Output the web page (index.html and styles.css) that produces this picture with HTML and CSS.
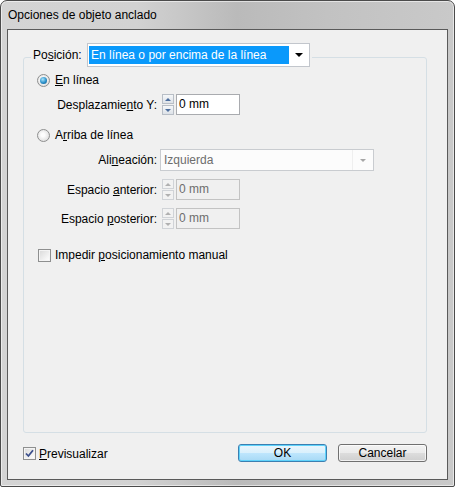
FILE: index.html
```html
<!DOCTYPE html>
<html lang="es">
<head>
  <meta charset="UTF-8" />
  <title>Opciones de objeto anclado</title>
  <link rel="stylesheet" href="styles.css">
</head>
<body>
  <div class="window">
    <div class="titlebar">Opciones de objeto anclado</div>

    <div class="client">
      <div class="group">
        <!-- group header sits over the top border -->
        <div class="group-head">
          <span class="head-label">Po<u>s</u>ición:</span>
          <div class="select select-focus">
            <span class="select-value">En línea o por encima de la línea</span>
            <span class="select-arrow"></span>
          </div>
        </div>

        <div class="option row-inline">
          <span class="radio checked"></span>
          <span><u>E</u>n línea</span>
        </div>
        <div class="field-grid grid-inline">
          <span class="field-label">Desplazamie<u>n</u>to Y:</span>
          <div class="spin-field">
            <div class="spinner">
              <span class="spin-btn up"></span>
              <span class="spin-btn down"></span>
            </div>
            <div class="input">0 mm</div>
          </div>
        </div>

        <div class="option row-above">
          <span class="radio"></span>
          <span>A<u>r</u>riba de línea</span>
        </div>
        <div class="field-grid grid-above">
          <span class="field-label">Ali<u>n</u>eación:</span>
          <div class="select select-disabled">
            <span class="select-value">Izquierda</span>
            <span class="select-arrow"></span>
          </div>

          <span class="field-label">Espacio <u>a</u>nterior:</span>
          <div class="spin-field is-disabled">
            <div class="spinner">
              <span class="spin-btn up"></span>
              <span class="spin-btn down"></span>
            </div>
            <div class="input">0 mm</div>
          </div>

          <span class="field-label">Espacio <u>p</u>osterior:</span>
          <div class="spin-field is-disabled">
            <div class="spinner">
              <span class="spin-btn up"></span>
              <span class="spin-btn down"></span>
            </div>
            <div class="input">0 mm</div>
          </div>
        </div>

        <div class="option row-manual">
          <span class="checkbox"></span>
          <span>Impedir <u>p</u>osicionamiento manual</span>
        </div>
      </div>

      <div class="footer">
        <div class="option preview">
          <span class="checkbox">
            <svg width="9" height="9" viewBox="0 0 9 9"><path d="M1 4.5 L3.4 7 L8 1.2" fill="none" stroke="#3b4f8c" stroke-width="1.8"/></svg>
          </span>
          <span><u>P</u>revisualizar</span>
        </div>
        <div class="buttons">
          <button class="btn btn-default">OK</button>
          <button class="btn">Cancelar</button>
        </div>
      </div>
    </div>
  </div>
</body>
</html>
```

FILE: styles.css
```css
body {
  margin: 0;
  font-family: "Liberation Sans", Arial, sans-serif;
  font-size: 12px;
  color: #000;
  background-color: #fff;
}

.window {
  height: 487px;
  box-sizing: border-box;
  display: flex;
  flex-direction: column;
  border: 1px solid #4b4b4b;
  border-radius: 7px 7px 2px 2px;
  background: linear-gradient(to right, #d4d4d4 0%, #d2d2d2 30%, #bababa 52%, #c2c2c2 72%, #c9c9c9 100%);
  box-shadow: inset 0 0 0 1px rgba(255, 255, 255, 0.55);
}

.titlebar {
  height: 28px;
  line-height: 28px;
  padding-left: 7px;
}

.client {
  flex: 1;
  display: flex;
  flex-direction: column;
  margin: 0 6px 6px;
  border: 1px solid #5a5a5a;
  background-color: #f0f0f0;
}

/* Group box */
.group {
  flex: 1;
  display: flex;
  flex-direction: column;
  margin: 27px 20px 0 15px;
  border: 1px solid #d5dfe5;
  border-radius: 3px;
}

.group-head {
  align-self: flex-start;
  display: flex;
  align-items: center;
  margin: -15px 0 0 7px;
  padding: 0 2px;
  background-color: #f0f0f0;
}

.head-label {
  width: 54px;
}

.select {
  box-sizing: border-box;
  display: flex;
  border: 1px solid #c2c6cc;
  background-color: #fff;
}

.select-focus {
  width: 223px;
  height: 24px;
  padding: 2px 0 2px 1px;
}

.select-focus .select-value {
  flex: 1;
  padding-left: 2px;
  line-height: 18px;
  background-color: #0a99fb;
  color: #fff;
}

.select-arrow {
  width: 20px;
  display: flex;
  align-items: center;
  justify-content: center;
}

.select-arrow::after {
  content: "";
  border-top: 4px solid #000;
  border-left: 4px solid transparent;
  border-right: 4px solid transparent;
}

.select-disabled {
  width: 214px;
  height: 22px;
  border-color: #c9ccd0;
  background-color: #fcfcfc;
}

.select-disabled .select-value {
  flex: 1;
  padding-left: 3px;
  line-height: 20px;
  color: #6d6d6d;
  border-right: 1px solid #efefef;
}

.select-disabled .select-arrow::after {
  border-top-width: 3px;
  border-left-width: 3px;
  border-right-width: 3px;
  border-top-color: #a6a6a6;
}

/* Radios and checkboxes */
.option {
  display: flex;
  align-items: center;
  gap: 5px;
  height: 16px;
  margin-left: 13px;
}

.radio {
  width: 13px;
  height: 13px;
  box-sizing: border-box;
  display: flex;
  align-items: center;
  justify-content: center;
  border: 1px solid #8e8f8f;
  border-radius: 50%;
  background: radial-gradient(circle at 45% 45%, #fdfdfd 20%, #d3d3d3 100%);
}

.radio.checked::after {
  content: "";
  width: 7px;
  height: 7px;
  border-radius: 50%;
  background: radial-gradient(circle at 40% 35%, #a8e4fb 0%, #2a8fc9 55%, #0b4d7a 100%);
}

.checkbox {
  width: 13px;
  height: 13px;
  box-sizing: border-box;
  display: flex;
  align-items: center;
  justify-content: center;
  border: 1px solid #8e8f8f;
  background: linear-gradient(135deg, #d8d8d8 0%, #f4f4f4 70%, #fff 100%);
  box-shadow: inset 0 0 0 1px #f4f4f4;
}

.row-inline {
  margin-top: 5px;
}

.row-above {
  margin-top: 12px;
}

.row-manual {
  margin-top: 18px;
  margin-left: 14px;
  gap: 4px;
}

/* Label / control grid */
.field-grid {
  display: grid;
  grid-template-columns: 120px auto;
  column-gap: 3px;
  row-gap: 8px;
  align-items: center;
  justify-content: start;
  margin-left: 13px;
}

.field-label {
  text-align: right;
}

.grid-inline {
  margin-top: 6px;
}

.grid-above {
  margin-top: 6px;
}

.spin-field {
  display: flex;
  gap: 2px;
  height: 21px;
  margin-left: 2px;
}

.spinner {
  width: 12px;
  display: flex;
  flex-direction: column;
  gap: 1px;
}

.spin-btn {
  flex: 1;
  display: flex;
  align-items: center;
  justify-content: center;
  border: 1px solid #b8bec6;
  background: linear-gradient(#f5f7f9, #dde2e8);
}

.spin-btn.up::after {
  content: "";
  border-bottom: 3px solid #4d6e9e;
  border-left: 3px solid transparent;
  border-right: 3px solid transparent;
}

.spin-btn.down::after {
  content: "";
  border-top: 3px solid #4d6e9e;
  border-left: 3px solid transparent;
  border-right: 3px solid transparent;
}

.input {
  width: 64px;
  box-sizing: border-box;
  padding-left: 2px;
  line-height: 19px;
  border: 1px solid #a9abaf;
  background-color: #fff;
}

.spin-field.is-disabled .spin-btn {
  border-color: #d0d3d7;
  background: #f2f2f2;
}

.spin-field.is-disabled .spin-btn::after {
  border-top-color: #b0b0b0;
  border-bottom-color: #b0b0b0;
}

.spin-field.is-disabled .spin-btn.up::after {
  border-top-color: transparent;
}

.spin-field.is-disabled .spin-btn.down::after {
  border-bottom-color: transparent;
}

.spin-field.is-disabled .input {
  border-color: #c3c3c3;
  background-color: #f0f0f0;
  color: #6d6d6d;
}

/* Footer */
.footer {
  height: 46px;
  box-sizing: border-box;
  display: flex;
  align-items: flex-start;
  padding: 11px 20px 0 15px;
}

.preview {
  margin: 3px 0 0;
  gap: 3px;
  height: 13px;
}

.buttons {
  display: flex;
  gap: 11px;
  margin-left: auto;
}

.btn {
  width: 89px;
  height: 18px;
  box-sizing: border-box;
  padding: 0;
  font: inherit;
  color: #000;
  border: 1px solid #707070;
  border-radius: 3px;
  background: linear-gradient(#f2f2f2 0%, #ebebeb 50%, #dddddd 50%, #cfcfcf 100%);
  box-shadow: inset 0 0 0 1px rgba(255, 255, 255, 0.7);
}

.btn-default {
  border-color: #3c7fb1;
  background: linear-gradient(#eaf6fd 0%, #d9f0fc 50%, #bee6fd 50%, #a7d9f5 100%);
  box-shadow: inset 0 0 0 1px #5fd3fb;
}
```
